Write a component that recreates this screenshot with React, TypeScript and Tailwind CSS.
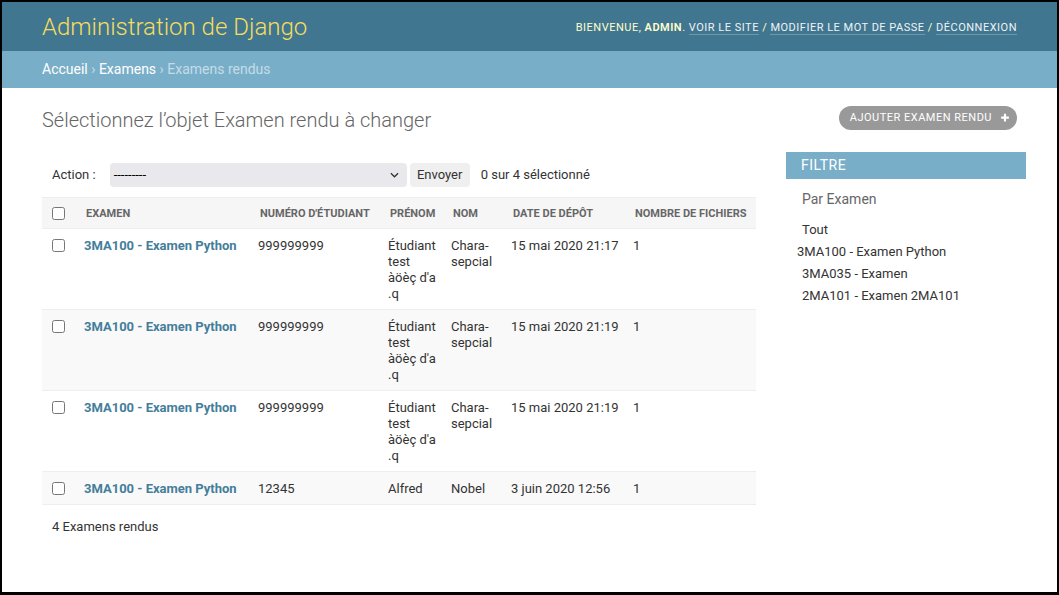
import React from "react";

type Row = {
  examen: string;
  numero: string;
  prenom: string;
  nom: string;
  date: string;
  fichiers: string;
};

const rows: Row[] = [
  { examen: "3MA100 - Examen Python", numero: "999999999", prenom: "Étudiant test àöèç d'a .q", nom: "Chara-sepcial", date: "15 mai 2020 21:17", fichiers: "1" },
  { examen: "3MA100 - Examen Python", numero: "999999999", prenom: "Étudiant test àöèç d'a .q", nom: "Chara-sepcial", date: "15 mai 2020 21:19", fichiers: "1" },
  { examen: "3MA100 - Examen Python", numero: "999999999", prenom: "Étudiant test àöèç d'a .q", nom: "Chara-sepcial", date: "15 mai 2020 21:19", fichiers: "1" },
  { examen: "3MA100 - Examen Python", numero: "12345", prenom: "Alfred", nom: "Nobel", date: "3 juin 2020 12:56", fichiers: "1" },
];

const cols = "grid grid-cols-[34px_174px_130px_63px_60px_122px_131px]";

function PlusIcon() {
  return (
    <svg viewBox="0 0 1792 1792" className="w-[10px] h-[10px]" fill="#fff">
      <path d="M1600 736v192q0 40-28 68t-68 28h-416v416q0 40-28 68t-68 28h-192q-40 0-68-28t-28-68v-416h-416q-40 0-68-28t-28-68v-192q0-40 28-68t68-28h416v-416q0-40 28-68t68-28h192q40 0 68 28t28 68v416h416q40 0 68 28t28 68z" />
    </svg>
  );
}

function Checkbox() {
  return <input type="checkbox" className="m-0 w-[13px] h-[13px] align-middle" />;
}

export default function App() {
  return (
    <div className="w-[1059px] h-[595px] border-2 border-b-[3px] border-black bg-white overflow-hidden font-['Roboto','Liberation_Sans',sans-serif] text-[#333]">
      {/* Header */}
      <header className="h-[49px] bg-[#417690] px-[40px] flex items-center justify-between">
        <h1 className="text-[24px] font-light text-[#f5dd5d] leading-[29px] mt-[2px]">
          Administration de Django
        </h1>
        <div className="text-[11px] tracking-[0.5px] uppercase text-[#ffc] leading-[14px] mt-[2px]">
          Bienvenue, <strong className="font-semibold">admin</strong>.{" "}
          <a className="text-[#eef3f6] border-b border-white/25">Voir le site</a> /{" "}
          <a className="text-[#eef3f6] border-b border-white/25">Modifier le mot de passe</a> /{" "}
          <a className="text-[#eef3f6] border-b border-white/25">Déconnexion</a>
        </div>
      </header>

      {/* Breadcrumbs */}
      <div className="h-[37px] bg-[#79aec8] px-[40px] flex items-center text-[14px] text-[#c4dce8] whitespace-pre">
        <a className="text-white">Accueil</a>
        <span> › </span>
        <a className="text-white">Examens</a>
        <span> › Examens rendus</span>
      </div>

      {/* Content */}
      <div className="pt-[20px] pl-[40px] pr-[31px]">
        <div className="flex justify-between items-start mb-[20px]">
          <h1 className="text-[20px] font-light text-[#666] leading-[24px]">
            Sélectionnez l’objet Examen rendu à changer
          </h1>
          <a className="mt-[-2px] mr-[9px] h-[24px] rounded-full bg-[#999] pl-[11px] pr-[7px] flex items-center gap-[8px] text-[11px] tracking-[0.5px] uppercase text-white">
            Ajouter examen rendu
            <PlusIcon />
          </a>
        </div>

        <div className="flex gap-[30px]">
          {/* Changelist */}
          <div className="w-[714px]">
            <div className="pt-[11px] pb-[10px] pl-[10px] flex items-center text-[13px]">
              <span>Action :</span>
              <div className="ml-[14px] w-[297px] h-[24px] rounded-[4px] bg-[#e9e9ed] pl-[4px] pr-[8px] flex items-center justify-between text-black">
                <span>---------</span>
                <svg viewBox="0 0 10 6" className="w-[9px] h-[6px]" fill="none" stroke="#333" strokeWidth="1.4">
                  <path d="M1 1l4 4 4-4" />
                </svg>
              </div>
              <div className="ml-[3px] w-[60px] h-[24px] rounded-[4px] bg-[#efefef] flex items-center justify-center">
                Envoyer
              </div>
              <span className="ml-[11px]">0 sur 4 sélectionné</span>
            </div>

            <div className={`${cols} h-[32px] border-y border-[#eee] bg-[#f6f6f6] items-center text-[11px] font-bold uppercase text-[#666] whitespace-nowrap`}>
              <div className="pl-[10px] pt-[1px]"><Checkbox /></div>
              <div className="px-[10px] pt-[2px]">Examen</div>
              <div className="px-[10px] pt-[2px]">Numéro d'étudiant</div>
              <div className="px-[10px] pt-[2px]">Prénom</div>
              <div className="px-[10px] pt-[2px]">Nom</div>
              <div className="px-[10px] pt-[2px]">Date de dépôt</div>
              <div className="px-[10px] pt-[2px]">Nombre de fichiers</div>
            </div>

            {rows.map((r, i) => (
              <div
                key={i}
                className={`${cols} border-b border-[#eee] text-[13px] leading-[16px] ${i % 2 === 1 ? "bg-[#f9f9f9]" : "bg-white"}`}
              >
                <div className="pl-[10px] pt-[8px]"><Checkbox /></div>
                <div className="pl-[8px] pr-[8px] pt-[9px] pb-[7px]">
                  <a className="font-bold text-[#447e9b]">{r.examen}</a>
                </div>
                <div className="pl-[8px] pr-[8px] pt-[9px] pb-[7px]">{r.numero}</div>
                <div className="pl-[8px] pr-[2px] pt-[9px] pb-[7px]">{r.prenom}</div>
                <div className="pl-[8px] pr-[4px] pt-[9px] pb-[7px]">{r.nom}</div>
                <div className="pl-[8px] pr-[4px] pt-[9px] pb-[7px] whitespace-nowrap">{r.date}</div>
                <div className="pl-[8px] pr-[8px] pt-[9px] pb-[7px]">{r.fichiers}</div>
              </div>
            ))}

            <p className="pt-[11px] pl-[10px] text-[13px] leading-[22px]">4 Examens rendus</p>
          </div>

          {/* Filter */}
          <div className="w-[240px]">
            <h2 className="h-[27px] bg-[#79aec8] px-[15px] flex items-center text-[14px] uppercase tracking-[0.5px] text-white">
              Filtre
            </h2>
            <h3 className="mt-[12px] px-[16px] text-[14px] leading-[17px] text-[#666]">Par Examen</h3>
            <ul className="mt-[11px] px-[16px] text-[13px] text-[#333]">
              <li className="leading-[22px]">Tout</li>
              <li className="leading-[22px] ml-[-5px]">3MA100 - Examen Python</li>
              <li className="leading-[22px]">3MA035 - Examen</li>
              <li className="leading-[22px]">2MA101 - Examen 2MA101</li>
            </ul>
          </div>
        </div>
      </div>
    </div>
  );
}
